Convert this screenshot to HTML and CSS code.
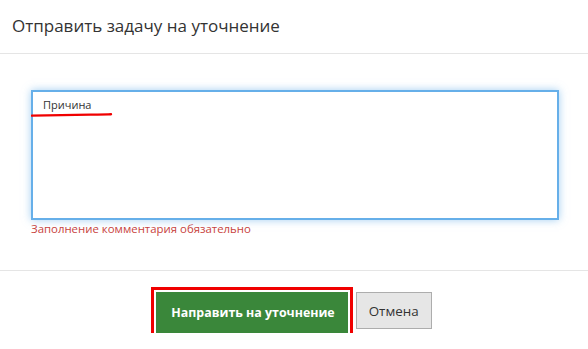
FILE: index.html
```html
<!DOCTYPE html>
<html lang="ru">

<head>
    <meta charset="UTF-8">
    <meta name="viewport" content="width=device-width, initial-scale=1.0">
    <title>Отправить задачу на уточнение</title>
    <link rel="stylesheet" href="styles.css">
</head>

<body>
    <div class="modal">
        <div class="modal-header">Отправить задачу на уточнение</div>

        <div class="modal-body">
            <div class="field">
                <textarea class="comment">Причина</textarea>
                <!-- hand-drawn marker under the text -->
                <svg class="mark" width="82" height="6" viewBox="0 0 82 6">
                    <path d="M1 3.6 C 20 3.4, 40 2.8, 60 2.6 S 75 2.4, 80 2.3" stroke="#f00000" stroke-width="2.4" fill="none" stroke-linecap="round"/>
                </svg>
            </div>
            <div class="error">Заполнение комментария обязательно</div>
        </div>

        <div class="modal-footer">
            <button class="btn btn-send">Направить на уточнение</button>
            <button class="btn btn-cancel">Отмена</button>
        </div>
    </div>
</body>

</html>
```

FILE: styles.css
```css
body {
    margin: 0;
    background: white;
    font-family: "Open Sans", sans-serif;
    color: #333;
}

.modal {
    width: 588px;
}

.modal-header {
    height: 54px;
    box-sizing: border-box;
    padding: 0 12px 2px;
    display: flex;
    align-items: center;
    font-size: 17px;
    border-bottom: 1px solid #e5e5e5;
}

.modal-body {
    height: 216px;
    box-sizing: border-box;
    padding: 36px 29px 0 31px;
}

.field {
    position: relative;
}

.comment {
    display: block;
    width: 528px;
    height: 130px;
    box-sizing: border-box;
    margin: 0;
    padding: 5px 10px;
    border: 2px solid #66afe9;
    resize: none;
    outline: none;
    font-family: "Open Sans", sans-serif;
    font-size: 11px;
    color: #333;
    box-shadow: 0 0 8px rgba(102, 175, 233, 0.6);
}

.mark {
    position: absolute;
    top: 22px;
    left: 0;
}

.error {
    margin-top: 1px;
    font-size: 11.4px;
    color: #c9423c;
}

.modal-footer {
    border-top: 1px solid #e5e5e5;
    padding: 21px 0 0;
    display: flex;
    justify-content: center;
    align-items: flex-start;
    gap: 8px;
}

.btn {
    font-family: "Open Sans", sans-serif;
    cursor: pointer;
}

.btn-send {
    height: 41px;
    padding: 0 13px 0 15px;
    background: #3a873a;
    border: none;
    color: white;
    font-size: 12.4px;
    font-weight: bold;
    outline: 3px solid #f00000;
    outline-offset: 2px;
}

.btn-cancel {
    height: 37px;
    padding: 0 12px;
    background: #e6e6e6;
    border: 1px solid #adadad;
    color: #333;
    font-size: 13.4px;
}
```
